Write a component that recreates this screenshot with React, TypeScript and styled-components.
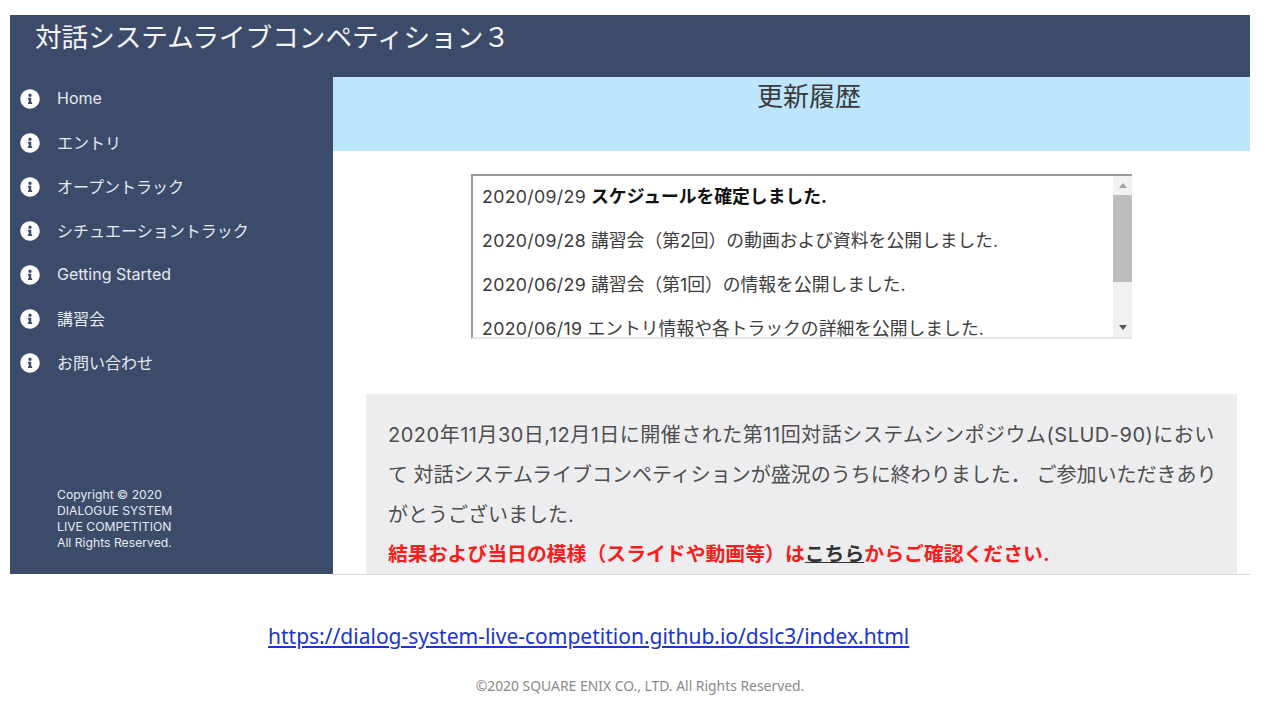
import { FaInfoCircle } from "react-icons/fa";
import styled, { createGlobalStyle } from "styled-components";

const NAV_ITEMS = [
    "Home",
    "エントリ",
    "オープントラック",
    "シチュエーショントラック",
    "Getting Started",
    "講習会",
    "お問い合わせ",
];

const UPDATES = [
    { date: "2020/09/29", text: "スケジュールを確定しました.", strong: true },
    { date: "2020/09/28", text: "講習会（第2回）の動画および資料を公開しました." },
    { date: "2020/06/29", text: "講習会（第1回）の情報を公開しました." },
    { date: "2020/06/19", text: "エントリ情報や各トラックの詳細を公開しました." },
];

function App() {
    return (
        <>
            <GlobalStyle />
            <Slide>
                <Frame>
                    <SiteHeader>対話システムライブコンペティション３</SiteHeader>
                    <FrameBody>
                        <Sidebar>
                            <NavList>
                                {NAV_ITEMS.map(item => (
                                    <NavItem key={item}>
                                        <FaInfoCircle size={20} />
                                        <span>{item}</span>
                                    </NavItem>
                                ))}
                            </NavList>
                            <Copyright>
                                Copyright © 2020
                                <br />
                                DIALOGUE SYSTEM
                                <br />
                                LIVE COMPETITION
                                <br />
                                All Rights Reserved.
                            </Copyright>
                        </Sidebar>
                        <Main>
                            <Banner>更新履歴</Banner>
                            <UpdatesBox>
                                <UpdatesList>
                                    {UPDATES.map(u => (
                                        <UpdateRow key={u.date}>
                                            <UpdateDate>{u.date}</UpdateDate> {u.strong ? <strong>{u.text}</strong> : u.text}
                                        </UpdateRow>
                                    ))}
                                </UpdatesList>
                                <Scrollbar>
                                    <ScrollArrow $up />
                                    <ScrollThumb />
                                    <ScrollArrow />
                                </Scrollbar>
                            </UpdatesBox>
                            <Notice>
                                <NoticeLine $spread>2020年11月30日,12月1日に開催された第11回対話システムシンポジウム(SLUD-90)におい</NoticeLine>
                                <NoticeLine>て 対話システムライブコンペティションが盛況のうちに終わりました． ご参加いただきあり</NoticeLine>
                                <NoticeLine>がとうございました.</NoticeLine>
                                <NoticeAlert>
                                    結果および当日の模様（スライドや動画等）は<NoticeLink>こちら</NoticeLink>からご確認ください.
                                </NoticeAlert>
                            </Notice>
                        </Main>
                    </FrameBody>
                </Frame>
                <SourceLink href="#">https://dialog-system-live-competition.github.io/dslc3/index.html</SourceLink>
                <Credit>©2020 SQUARE ENIX CO., LTD. All Rights Reserved.</Credit>
            </Slide>
        </>
    );
}

export default App;

const GlobalStyle = createGlobalStyle`
  html, body { margin: 0; padding: 0; background: #fff; }
  body { font-family: Inter, "Noto Sans CJK JP", sans-serif; }
`;
const Slide = styled.div`
  width: 1280px;
  height: 720px;
  overflow: hidden;
  padding-top: 15px;
  box-sizing: border-box;
  display: flex;
  flex-direction: column;
`;
const Frame = styled.div`
  width: 1240px;
  height: 560px;
  margin-left: 10px;
  flex: none;
  display: flex;
  flex-direction: column;
  overflow: hidden;
`;
const SiteHeader = styled.header`
  height: 62px;
  flex: none;
  background: #3d4b6b;
  color: #f4f5f8;
  font-size: 26.6px;
  line-height: 44px;
  padding-left: 25px;
`;
const FrameBody = styled.div`
  flex: 1;
  min-height: 0;
  display: grid;
  grid-template-columns: 323px 917px;
`;
const Sidebar = styled.aside`
  background: #3d4b6b;
  display: flex;
  flex-direction: column;
  justify-content: space-between;
  padding: 0 0 23px 10px;
  margin-bottom: 1px;
  box-sizing: border-box;
`;
const NavList = styled.nav`
  display: flex;
  flex-direction: column;
  gap: 16px;
  padding-top: 7px;
`;
const NavItem = styled.div`
  height: 28px;
  display: flex;
  align-items: center;
  gap: 17px;
  font-size: 16px;
  color: #e6e9ef;
  svg { color: #fff; flex: none; position: relative; top: 1px; }
`;
const Copyright = styled.div`
  margin-left: 37px;
  font-size: 12.2px;
  line-height: 16px;
  color: #e6e9ef;
`;
const Main = styled.main`
  background: #fff;
  display: flex;
  flex-direction: column;
  border-bottom: 1px solid #d8d8dc;
  box-sizing: border-box;
  overflow: hidden;
  min-height: 0;
`;
const Banner = styled.div`
  height: 74px;
  flex: none;
  background: #bde6fd;
  color: #3a3a3a;
  font-size: 26px;
  line-height: 40px;
  text-align: center;
  padding-left: 35px;
`;
const UpdatesBox = styled.div`
  width: 661px;
  height: 165px;
  flex: none;
  margin: 23px 0 0 138px;
  box-sizing: border-box;
  border-top: 2px solid #9a9a9a;
  border-left: 2px solid #9a9a9a;
  border-bottom: 2px solid #e4e4e4;
  display: flex;
  overflow: hidden;
`;
const UpdatesList = styled.div`
  flex: 1;
  padding: 1px 0 0 9px;
  overflow: hidden;
`;
const UpdateRow = styled.div`
  height: 44px;
  line-height: 40px;
  font-size: 17.8px;
  color: #3c3c3c;
  white-space: nowrap;
  strong { color: #111; font-weight: 700; }
`;
const UpdateDate = styled.span`
  letter-spacing: 0.3px;
`;
const Scrollbar = styled.div`
  width: 19px;
  flex: none;
  background: #f1f1f1;
  display: flex;
  flex-direction: column;
  align-items: center;
  justify-content: space-between;
`;
const ScrollArrow = styled.div<{ $up?: boolean }>`
  width: 0;
  height: 0;
  margin: 7px 0;
  border-left: 4px solid transparent;
  border-right: 4px solid transparent;
  border-bottom: ${p => (p.$up ? "5px solid #a3a3a3" : "none")};
  border-top: ${p => (p.$up ? "none" : "5px solid #555")};
`;
const ScrollThumb = styled.div`
  width: 100%;
  height: 87px;
  background: #bdbdbd;
  margin-bottom: auto;
`;
const Notice = styled.section`
  margin: 55px 13px 0 33px;
  flex: 1;
  background: #ededef;
  padding: 21px 0 0 22px;
  color: #4e4e4e;
  overflow: hidden;
`;
const NoticeLine = styled.div<{ $spread?: boolean }>`
  height: 40px;
  line-height: 40px;
  font-size: 20px;
  letter-spacing: ${p => (p.$spread ? "0.5px" : "0")};
  white-space: nowrap;
`;
const NoticeAlert = styled.div`
  height: 40px;
  line-height: 38px;
  font-size: 19.85px;
  font-weight: 700;
  color: #f5201c;
  white-space: nowrap;
`;
const NoticeLink = styled.span`
  color: #333;
  text-decoration: underline;
`;
const SourceLink = styled.a`
  margin: 47px 0 0 268px;
  font-family: "Noto Sans", sans-serif;
  font-size: 21px;
  line-height: 28px;
  color: #1a35d0;
  text-decoration: underline;
  white-space: nowrap;
`;
const Credit = styled.div`
  margin-top: 27px;
  text-align: center;
  font-family: "Noto Sans", sans-serif;
  font-size: 13.9px;
  line-height: 18px;
  color: #8a8a8a;
`;
